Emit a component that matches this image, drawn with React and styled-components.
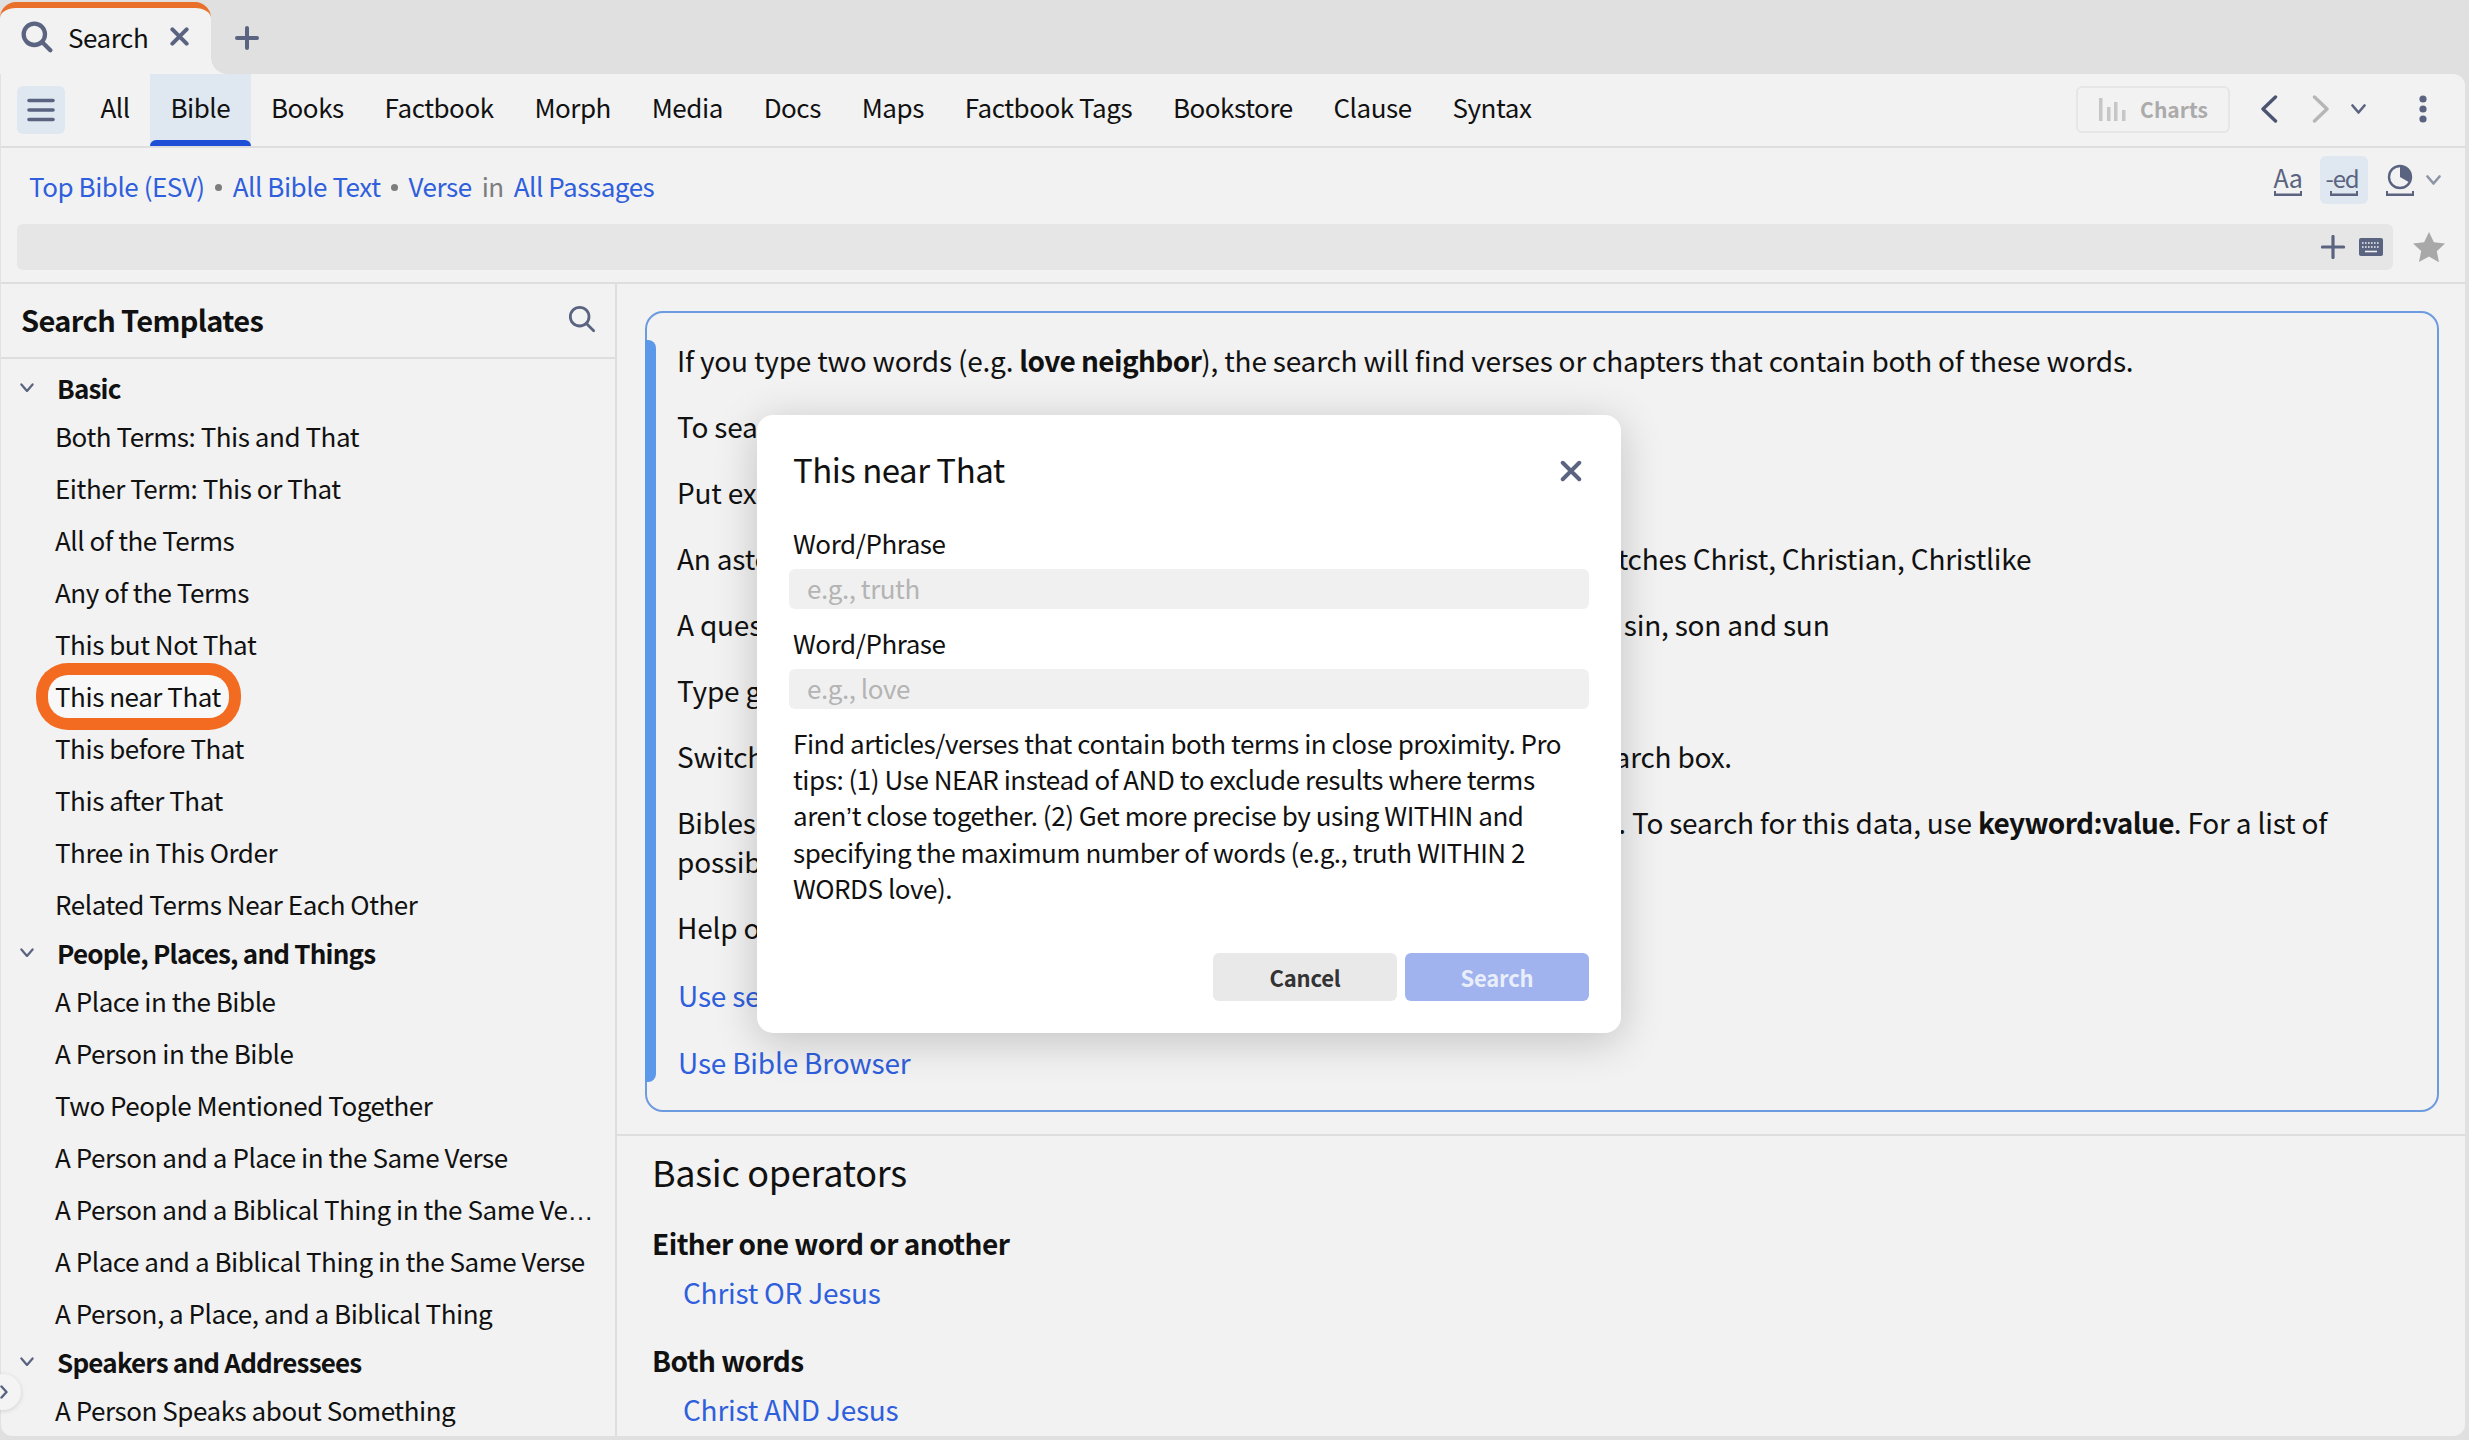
import React from "react";
import styled, { createGlobalStyle } from "styled-components";

const Global = createGlobalStyle`
  html, body { margin: 0; padding: 0; background: #e0e0e0; }
  * { box-sizing: border-box; }
  body { font-family: "Noto Sans CJK SC", "Noto Sans", sans-serif; color: #111; }
`;

const ICON = "#5a6480";

const Page = styled.div`
  position: relative;
  width: 2469px;
  height: 1440px;
  display: flex;
  flex-direction: column;
  background: #e0e0e0;
  padding: 0 4px 4px 0;
  overflow: hidden;
  font-size: 26px;
  letter-spacing: -0.46px;
`;
const TabBar = styled.div`
  height: 74px;
  display: flex;
  align-items: flex-start;
`;
const Tab = styled.div`
  position: relative;
  margin-top: 2px;
  width: 211px;
  height: 72px;
  background: #f2f2f2;
  border-top: 6px solid #e8702a;
  border-radius: 16px 16px 0 0;
  display: flex;
  align-items: center;
  padding: 0 0 9px 21px;
  &::after {
    content: "";
    position: absolute;
    right: -16px;
    bottom: 0;
    width: 16px;
    height: 16px;
    background: radial-gradient(circle at top right, transparent 15.5px, #f2f2f2 16px);
  }
`;
const TabTitle = styled.span`
  margin-left: 15px;
  line-height: 36px;
`;
const TabClose = styled.span`
  display: flex;
  margin-left: 22px;
`;
const AddTab = styled.span`
  display: flex;
  margin: 26px 0 0 24px;
`;
const Panel = styled.div`
  flex: 1;
  min-height: 0;
  display: flex;
  flex-direction: column;
  background: #f2f2f2;
  border-left: 1px solid #e2e2e2;
  border-radius: 0 12px 12px 12px;
`;
const NavBar = styled.nav`
  height: 74px;
  flex: none;
  display: flex;
  align-items: stretch;
  border-bottom: 2px solid #dedede;
  padding: 0 38px 0 16px;
`;
const Hamburger = styled.span`
  width: 48px;
  height: 48px;
  margin: 12px 15px 0 0;
  border-radius: 6px;
  background: #dfe7f1;
  display: flex;
  align-items: center;
  justify-content: center;
`;
const NavTab = styled.a`
  position: relative;
  padding: 0 20.4px 7px;
  display: flex;
  align-items: center;
  line-height: 36px;
  background: ${p => (p.$active ? "#dfe7f1" : "transparent")};
  ${p => p.$active && `&::after {
    content: "";
    position: absolute;
    left: 0; right: 0; bottom: 0;
    height: 6px;
    background: #1f4fd6;
    border-radius: 6px 6px 0 0;
  }`}
`;
const NavTools = styled.div`
  margin-left: auto;
  display: flex;
  align-items: center;
  padding-bottom: 2px;
`;
const ChartsButton = styled.span`
  width: 154px;
  height: 47px;
  border: 2px solid #e6e6e6;
  border-radius: 6px;
  color: #ababab;
  font-size: 21px;
  font-weight: 700;
  letter-spacing: 0;
  display: flex;
  align-items: center;
  justify-content: center;
  gap: 14px;
`;
const NavIcon = styled.span`
  display: flex;
  margin-left: ${p => p.$gap}px;
`;
const QueryArea = styled.div`
  flex: none;
  height: 136px;
  border-bottom: 2px solid #dedede;
  display: flex;
  flex-direction: column;
`;
const CrumbRow = styled.div`
  height: 76px;
  display: flex;
  align-items: center;
  padding: 0 24px 0 28px;
`;
const Crumbs = styled.div`
  display: flex;
  align-items: center;
  line-height: 36px;
`;
const Link = styled.a`
  color: #2f5fdc;
`;
const Dot = styled.span`
  width: 7px;
  height: 7px;
  border-radius: 50%;
  background: #7d7d7d;
  margin: 3px 10.5px 0;
`;
const Word = styled.span`
  color: #7d7d7d;
  margin: 0 10px;
`;
const ViewTools = styled.div`
  margin: 0 0 12px auto;
  display: flex;
  align-items: center;
  gap: 8px;
`;
const ViewButton = styled.span`
  width: 48px;
  height: 48px;
  border-radius: 6px;
  display: flex;
  flex-direction: column;
  align-items: center;
  justify-content: flex-end;
  padding-bottom: 8px;
  color: ${ICON};
  background: ${p => (p.$on ? "#dfe7f1" : "transparent")};
  font-size: ${p => (p.$on ? "24px" : "25px")};
  line-height: 27px;
  letter-spacing: ${p => (p.$on ? "-1.2px" : "-0.4px")};
`;
const EdLabel = styled.span`
  margin-right: 4px;
`;
const SearchRow = styled.div`
  display: flex;
  align-items: center;
  padding: 0 20px 0 16px;
`;
const SearchBox = styled.div`
  flex: 1;
  height: 46px;
  background: #e6e6e6;
  border-radius: 6px;
  display: flex;
  align-items: center;
  justify-content: flex-end;
  padding-right: 10px;
  gap: 14px;
`;
const StarSlot = styled.span`
  display: flex;
  margin-left: 20px;
`;
const Body = styled.div`
  flex: 1;
  min-height: 0;
  display: flex;
`;
const Sidebar = styled.aside`
  width: 616px;
  flex: none;
  border-right: 2px solid #dedede;
  display: flex;
  flex-direction: column;
  overflow: hidden;
`;
const SideHead = styled.div`
  height: 75px;
  flex: none;
  border-bottom: 2px solid #dedede;
  display: flex;
  align-items: center;
  justify-content: space-between;
  padding: 0 19px 3px 20px;
  font-size: 29px;
  letter-spacing: -0.62px;
  font-weight: 700;
`;
const SideList = styled.div`
  padding-top: 6px;
  overflow: hidden;
`;
const Group = styled.div`
  height: 45px;
  display: flex;
  align-items: center;
  padding-left: 19px;
  font-weight: 700;
  letter-spacing: -0.8px;
`;
const GroupName = styled.span`
  margin-left: 23px;
`;
const Item = styled.div`
  height: 52px;
  display: flex;
  align-items: center;
  padding: 0 20px 2px 54px;
`;
const ItemLabel = styled.span`
  white-space: nowrap;
  line-height: 41px;
`;
const RingLabel = styled.span`
  line-height: 41px;
  margin: 2px 0 0 -7px;
  padding: 0 8px 2px 7px;
  background: #f8f8f8;
  border-radius: 20px;
  box-shadow: 0 0 0 12px #f26b21;
`;
const LatinGlyph = styled.span`
  font-family: "Liberation Sans", sans-serif;
  letter-spacing: 0;
  line-height: 1;
`;
const Main = styled.main`
  flex: 1;
  min-width: 0;
  overflow: hidden;
  display: flex;
  flex-direction: column;
`;
const Card = styled.section`
  position: relative;
  flex: none;
  margin: 27px 26px 22px 28px;
  height: 801px;
  border: 2px solid #6d9be0;
  border-radius: 18px;
  padding: 28px 30px 0 30px;
  letter-spacing: -0.2px;
  &::before {
    content: "";
    position: absolute;
    left: -2px;
    top: 27px;
    bottom: 28px;
    width: 11px;
    background: #5b98ea;
    border-radius: 0 8px 8px 0;
  }
`;
const Para = styled.p`
  margin: 0 0 27px;
  font-size: 28px;
  line-height: 39px;
  b { font-weight: 700; letter-spacing: -0.6px; }
`;
const CardLink = styled.a`
  display: block;
  position: relative;
  top: 2px;
  color: #2f5fdc;
  font-size: 28px;
  line-height: 39px;
  margin: 0 0 27.5px 1px;
`;
const Operators = styled.section`
  flex: 1;
  border-top: 2px solid #dedede;
  padding: 14px 0 0 35px;
  overflow: hidden;
  letter-spacing: -0.24px;
`;
const OpTitle = styled.h2`
  margin: 0;
  font-size: 36px;
  letter-spacing: -0.3px;
  font-weight: 400;
  line-height: 42px;
`;
const OpHead = styled.h3`
  margin: ${p => (p.$first ? "32px" : "30px")} 0 0;
  font-size: 28px;
  letter-spacing: -0.55px;
  font-weight: 700;
  line-height: 38px;
`;
const OpLink = styled.a`
  display: block;
  margin: 11px 0 0 31px;
  color: #2f5fdc;
  font-size: 28px;
  line-height: 38px;
`;
const Handle = styled.span`
  position: absolute;
  left: -15px;
  top: 1374px;
  width: 36px;
  height: 36px;
  border-radius: 50%;
  background: #f4f4f4;
  box-shadow: 0 1px 5px rgba(0,0,0,.14);
  display: flex;
  align-items: center;
  justify-content: flex-end;
  padding-right: 13px;
`;
const Modal = styled.div`
  position: absolute;
  left: 757px;
  top: 415px;
  width: 864px;
  height: 618px;
  background: #fff;
  border-radius: 16px;
  box-shadow: 0 8px 44px rgba(0,0,0,.2);
  padding: 30px 32px 32px 36px;
  display: flex;
  flex-direction: column;
`;
const ModalHead = styled.div`
  display: flex;
  align-items: center;
  justify-content: space-between;
  height: 48px;
  margin-bottom: 32px;
  padding-right: 7px;
`;
const ModalTitle = styled.h2`
  margin: 0;
  font-size: 33px;
  letter-spacing: -0.5px;
  font-weight: 400;
  line-height: 48px;
`;
const CloseSlot = styled.span`
  display: flex;
  margin-top: 3px;
`;
const FieldLabel = styled.label`
  display: block;
  line-height: 36px;
  margin-bottom: 8px;
`;
const Input = styled.div`
  height: 40px;
  margin: 0 0 16px -4px;
  padding-left: 18px;
  background: #f0f0f0;
  border-radius: 6px;
  color: #b4b4b4;
  line-height: 38px;
`;
const Help = styled.p`
  margin: 0;
  line-height: 36.2px;
`;
const Actions = styled.div`
  margin-top: auto;
  display: flex;
  justify-content: flex-end;
  gap: 8px;
`;
const Btn = styled.button`
  width: 184px;
  height: 48px;
  border: 0;
  border-radius: 6px;
  font: 700 22px "Noto Sans CJK SC", "Noto Sans", sans-serif;
  letter-spacing: -0.2px;
  background: ${p => (p.$primary ? "#a0b3ee" : "#e9e9e9")};
  color: ${p => (p.$primary ? "#e9eefb" : "#333")};
`;

const SearchIcon = ({ size = 30, w = 2.6 }) => (
  <svg width={size} height={size} viewBox="0 0 30 30" fill="none" stroke={ICON} strokeWidth={w} strokeLinecap="round">
    <circle cx="12.5" cy="12.5" r="10" />
    <path d="M20 20L27.5 27.5" />
  </svg>
);
const Cross = ({ size = 20, w = 3.6 }) => (
  <svg width={size} height={size} viewBox="0 0 20 20" stroke={ICON} strokeWidth={w} strokeLinecap="round">
    <path d="M2.5 2.5L17.5 17.5M17.5 2.5L2.5 17.5" />
  </svg>
);
const Chevron = ({ size = 15, w = 2.6, color = ICON }) => (
  <svg width={size} height={size * 0.7} viewBox="0 0 15 10.5" fill="none" stroke={color} strokeWidth={w} strokeLinecap="round" strokeLinejoin="round">
    <path d="M1.5 1.5L7.5 8.5L13.5 1.5" />
  </svg>
);
const Bracket = () => (
  <svg width="28" height="5" viewBox="0 0 28 5" fill={ICON}>
    <path d="M0 0h2v2.5h24V0h2v5H0z" />
  </svg>
);

const groups = [
  ["Basic", ["Both Terms: This and That", "Either Term: This or That", "All of the Terms", "Any of the Terms", "This but Not That", "This near That", "This before That", "This after That", "Three in This Order", "Related Terms Near Each Other"]],
  ["People, Places, and Things", ["A Place in the Bible", "A Person in the Bible", "Two People Mentioned Together", "A Person and a Place in the Same Verse", <React.Fragment key="cut">A Person and a Biblical Thing in the Same Ve<LatinGlyph>…</LatinGlyph></React.Fragment>, "A Place and a Biblical Thing in the Same Verse", "A Person, a Place, and a Biblical Thing"]],
  ["Speakers and Addressees", ["A Person Speaks about Something"]],
];
const tabs = ["All", "Bible", "Books", "Factbook", "Morph", "Media", "Docs", "Maps", "Factbook Tags", "Bookstore", "Clause", "Syntax"];

export default function App() {
  return (
    <Page>
      <Global />
      <TabBar>
        <Tab>
          <SearchIcon size={32} w={4} />
          <TabTitle>Search</TabTitle>
          <TabClose><Cross size={19} w={4.2} /></TabClose>
        </Tab>
        <AddTab>
          <svg width="24" height="24" viewBox="0 0 24 24" stroke={ICON} strokeWidth="4" strokeLinecap="round"><path d="M12 2v20M2 12h20" /></svg>
        </AddTab>
      </TabBar>
      <Panel>
        <NavBar>
          <Hamburger>
            <svg width="28" height="24" viewBox="0 0 28 24" stroke={ICON} strokeWidth="3.6" strokeLinecap="round"><path d="M2 2.5h24M2 12h24M2 21.5h24" /></svg>
          </Hamburger>
          {tabs.map(t => <NavTab key={t} $active={t === "Bible"}>{t}</NavTab>)}
          <NavTools>
            <ChartsButton>
              <svg width="28" height="24" viewBox="0 0 28 24" fill="#c6c6c6"><rect x="1" y="1" width="3.5" height="23" /><rect x="9" y="10" width="3.5" height="14" /><rect x="16" y="5" width="3.5" height="19" /><rect x="24" y="13" width="3.5" height="11" /></svg>
              Charts
            </ChartsButton>
            <NavIcon $gap={30}>
              <svg width="18" height="28" viewBox="0 0 18 28" fill="none" stroke="#4b5470" strokeWidth="3.4" strokeLinecap="round" strokeLinejoin="round"><path d="M15.5 2L3 14l12.5 12" /></svg>
            </NavIcon>
            <NavIcon $gap={34}>
              <svg width="18" height="28" viewBox="0 0 18 28" fill="none" stroke="#b6b6b6" strokeWidth="3.4" strokeLinecap="round" strokeLinejoin="round"><path d="M2.5 2L15 14 2.5 26" /></svg>
            </NavIcon>
            <NavIcon $gap={21}><Chevron /></NavIcon>
            <NavIcon $gap={53}>
              <svg width="8" height="28" viewBox="0 0 8 28" fill={ICON}><circle cx="4" cy="4" r="3.6" /><circle cx="4" cy="14" r="3.6" /><circle cx="4" cy="24" r="3.6" /></svg>
            </NavIcon>
          </NavTools>
        </NavBar>
        <QueryArea>
          <CrumbRow>
            <Crumbs>
              <Link>Top Bible (ESV)</Link><Dot /><Link>All Bible Text</Link><Dot /><Link>Verse</Link><Word>in</Word><Link>All Passages</Link>
            </Crumbs>
            <ViewTools>
              <ViewButton>Aa<Bracket /></ViewButton>
              <ViewButton $on><EdLabel>-ed</EdLabel><Bracket /></ViewButton>
              <ViewButton>
                <svg width="26" height="26" viewBox="0 0 26 26" style={{ marginBottom: 1 }}>
                  <circle cx="13" cy="13" r="11" fill="none" stroke={ICON} strokeWidth="2.4" />
                  <path d="M13 2a11 11 0 0 1 9.5 16.5L13 13z" fill={ICON} />
                </svg>
                <Bracket />
              </ViewButton>
              <NavIcon $gap={-6}><Chevron color="#8d94a6" /></NavIcon>
            </ViewTools>
          </CrumbRow>
          <SearchRow>
            <SearchBox>
              <svg width="24" height="24" viewBox="0 0 24 24" stroke={ICON} strokeWidth="3.2" strokeLinecap="round"><path d="M12 1.5v21M1.5 12h21" /></svg>
              <svg width="24" height="18" viewBox="0 0 24 18">
                <rect width="24" height="18" rx="2" fill={ICON} />
                <path d="M3 5h18M3 9h18" stroke="#f2f2f2" strokeWidth="1.4" strokeDasharray="1.6 1.4" />
                <path d="M6 13.5h12" stroke="#f2f2f2" strokeWidth="1.6" />
              </svg>
            </SearchBox>
            <StarSlot>
              <svg width="32" height="30" viewBox="0 0 32 30" fill="#a8a8a8"><path d="M16 0l4.9 10.3 11.1 1.3-8.2 7.7 2.2 11L16 24.6 6 30l2.2-11L0 11.6l11.1-1.3z" /></svg>
            </StarSlot>
          </SearchRow>
        </QueryArea>
        <Body>
          <Sidebar>
            <SideHead>
              Search Templates
              <SearchIcon size={28} w={3} />
            </SideHead>
            <SideList>
              {groups.map(([name, items]) => (
                <div key={name}>
                  <Group><Chevron size={14} w={2.4} /><GroupName>{name}</GroupName></Group>
                  {items.map((i, n) => (
                    <Item key={n}>
                      {i === "This near That" ? <RingLabel>{i}</RingLabel> : <ItemLabel>{i}</ItemLabel>}
                    </Item>
                  ))}
                </div>
              ))}
            </SideList>
          </Sidebar>
          <Main>
            <Card>
              <Para>If you type two words (e.g. <b>love neighbor</b>), the search will find verses or chapters that contain both of these words.</Para>
              <Para>To search for the exact words in a given order, use quotation marks.</Para>
              <Para>Put exact phrases in quotation marks, e.g. "love your neighbor"</Para>
              <Para>An asterisk stands for any sequence of characters, for example: Christ* matches Christ, Christian, Christlike</Para>
              <Para>A question mark stands for any single character, for example: s?n matches sin, son and sun</Para>
              <Para>Type greek or hebrew words to search the original languages directly.</Para>
              <Para>Switch between datasets like Bible and Books using the tabs above the search box.</Para>
              <Para>Bibles are tagged with data such as names, places, items and morphology. To search for this data, use <b>keyword:value</b>. For a list of possible keywords, see the documentation.</Para>
              <Para>Help on search</Para>
              <CardLink>Use search templates</CardLink>
              <CardLink>Use Bible Browser</CardLink>
            </Card>
            <Operators>
              <OpTitle>Basic operators</OpTitle>
              <OpHead $first>Either one word or another</OpHead>
              <OpLink>Christ OR Jesus</OpLink>
              <OpHead>Both words</OpHead>
              <OpLink>Christ AND Jesus</OpLink>
            </Operators>
          </Main>
        </Body>
      </Panel>
      <Handle>
        <svg width="8" height="14" viewBox="0 0 8 14" fill="none" stroke={ICON} strokeWidth="2.4" strokeLinecap="round" strokeLinejoin="round"><path d="M1.5 1.5L6.5 7l-5 5.5" /></svg>
      </Handle>
      <Modal>
        <ModalHead>
          <ModalTitle>This near That</ModalTitle>
          <CloseSlot><Cross size={22} w={3.6} /></CloseSlot>
        </ModalHead>
        <FieldLabel>Word/Phrase</FieldLabel>
        <Input>e.g., truth</Input>
        <FieldLabel>Word/Phrase</FieldLabel>
        <Input>e.g., love</Input>
        <Help>Find articles/verses that contain both terms in close proximity. Pro tips: (1) Use NEAR instead of AND to exclude results where terms aren<LatinGlyph>’</LatinGlyph>t close together. (2) Get more precise by using WITHIN and specifying the maximum number of words (e.g., truth WITHIN 2 WORDS love).</Help>
        <Actions>
          <Btn>Cancel</Btn>
          <Btn $primary>Search</Btn>
        </Actions>
      </Modal>
    </Page>
  );
}
